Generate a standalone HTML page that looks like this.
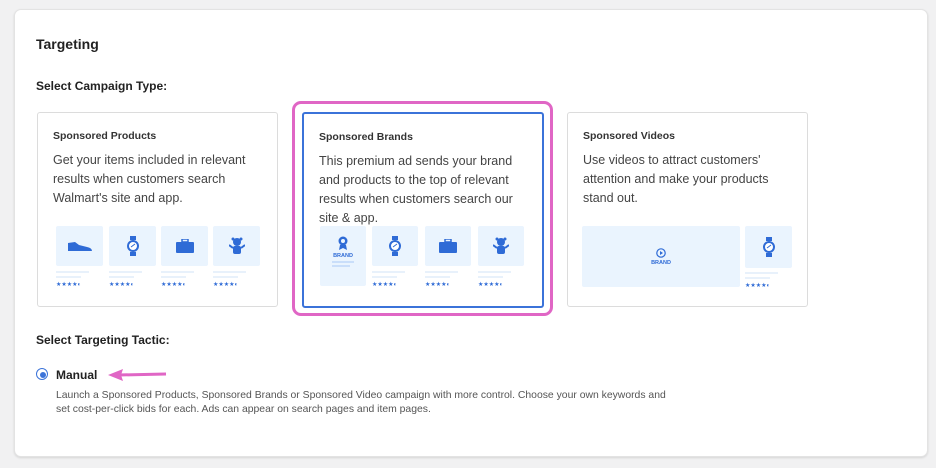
<!DOCTYPE html><html><head><style>
body{margin:0;width:936px;height:468px;background:#f1f1f2;font-family:"Liberation Sans",sans-serif;position:relative;overflow:hidden}
.main{position:absolute;left:14px;top:9px;width:912px;height:446px;background:#fff;border:1px solid #e3e3e3;border-radius:7px;box-shadow:0 1px 2px rgba(0,0,0,.12)}
.a{position:absolute}
.card{position:absolute;top:112px;width:239px;height:193px;border:1px solid #dcdcdc;border-radius:3px;background:#fff}
.card h4{margin:0;position:absolute;left:15px;top:17px;font-size:10.5px;color:#333;font-weight:bold}
.card p{margin:0;position:absolute;left:15px;top:38px;font-size:12.5px;line-height:19px;color:#444;width:215px}
.tile{position:absolute;background:#eaf4fe;border-radius:2px}
.ln{position:absolute;height:2px;background:#e8f1fb}
.st{position:absolute;font-size:6px;color:#2f6bd6;letter-spacing:0}
.ic{position:absolute;left:50%;top:50%;transform:translate(-50%,-50%)}
</style></head><body>
<div class="main"></div>
<div class="a" style="left:36px;top:36px;font-size:14px;font-weight:bold;color:#222">Targeting</div>
<div class="a" style="left:36px;top:79px;font-size:12px;font-weight:bold;color:#222">Select Campaign Type:</div>

<div class="a" style="left:292px;top:101px;width:255px;height:209px;border:3px solid #e066c5;border-radius:9px"></div>

<div class="card" style="left:37px"><h4>Sponsored Products</h4><p>Get your items included in relevant results when customers search Walmart's site and app.</p></div>
<div class="card" style="left:302px;border:2px solid #3b73d9;width:238px;height:192px"><h4>Sponsored Brands</h4><p>This premium ad sends your brand and products to the top of relevant results when customers search our site &amp; app.</p></div>
<div class="card" style="left:567px"><h4>Sponsored Videos</h4><p>Use videos to attract customers' attention and make your products stand out.</p></div>

<!-- card1 tiles -->
<div class="tile" style="left:56px;top:226px;width:47px;height:40px"><svg class="ic" width="26" height="12" viewBox="0 0 26 12"><path d="M1 3 L8 2 L12 5 L20 7 Q25 8 25 11 L1 11Z" fill="#2f6bd6"/></svg></div>
<div class="tile" style="left:109px;top:226px;width:47px;height:40px"><svg class="ic" width="12" height="20" viewBox="0 0 12 20"><rect x="3" y="0" width="6" height="4" fill="#2f6bd6"/><rect x="3" y="16" width="6" height="4" fill="#2f6bd6"/><circle cx="6" cy="10" r="5" fill="#fff" stroke="#2f6bd6" stroke-width="2"/><path d="M4 11 L8 8" stroke="#2f6bd6"/></svg></div>
<div class="tile" style="left:161px;top:226px;width:47px;height:40px"><svg class="ic" width="18" height="14" viewBox="0 0 18 14"><rect x="6" y="0" width="6" height="3" fill="none" stroke="#2f6bd6" stroke-width="1.5"/><rect x="0" y="3" width="18" height="11" rx="1" fill="#2f6bd6"/></svg></div>
<div class="tile" style="left:213px;top:226px;width:47px;height:40px"><svg class="ic" width="16" height="18" viewBox="0 0 16 18"><circle cx="8" cy="5" r="4" fill="#2f6bd6"/><circle cx="4" cy="2" r="1.5" fill="#2f6bd6"/><circle cx="12" cy="2" r="1.5" fill="#2f6bd6"/><rect x="4" y="9" width="8" height="8" rx="2" fill="#2f6bd6"/><path d="M4 11 L0 8 M12 11 L16 8" stroke="#2f6bd6" stroke-width="2"/></svg></div>
<div class="ln" style="left:56px;top:271px;width:33px"></div><div class="ln" style="left:56px;top:276px;width:25px"></div><div class="st" style="left:56px;top:281px">★★★★◐</div>
<div class="ln" style="left:109px;top:271px;width:33px"></div><div class="ln" style="left:109px;top:276px;width:25px"></div><div class="st" style="left:109px;top:281px">★★★★◐</div>
<div class="ln" style="left:161px;top:271px;width:33px"></div><div class="ln" style="left:161px;top:276px;width:25px"></div><div class="st" style="left:161px;top:281px">★★★★◐</div>
<div class="ln" style="left:213px;top:271px;width:33px"></div><div class="ln" style="left:213px;top:276px;width:25px"></div><div class="st" style="left:213px;top:281px">★★★★◐</div>

<!-- card2 tiles -->
<div class="tile" style="left:320px;top:226px;width:46px;height:60px"><svg class="a" style="left:18px;top:10px" width="10" height="14" viewBox="0 0 10 14"><circle cx="5" cy="5" r="4.5" fill="#2f6bd6"/><circle cx="5" cy="5" r="2" fill="#eaf4fe"/><path d="M2 9 L1 14 L5 12 L9 14 L8 9Z" fill="#2f6bd6"/></svg><div class="a" style="left:0;width:46px;top:27px;text-align:center;font-size:5.5px;font-weight:bold;color:#2f6bd6">BRAND</div><div class="ln" style="left:12px;top:35px;width:22px;background:#c9defa"></div><div class="ln" style="left:12px;top:39px;width:18px;background:#c9defa"></div></div>
<div class="tile" style="left:372px;top:226px;width:46px;height:40px"><svg class="ic" width="12" height="20" viewBox="0 0 12 20"><rect x="3" y="0" width="6" height="4" fill="#2f6bd6"/><rect x="3" y="16" width="6" height="4" fill="#2f6bd6"/><circle cx="6" cy="10" r="5" fill="#fff" stroke="#2f6bd6" stroke-width="2"/><path d="M4 11 L8 8" stroke="#2f6bd6"/></svg></div>
<div class="tile" style="left:425px;top:226px;width:46px;height:40px"><svg class="ic" width="18" height="14" viewBox="0 0 18 14"><rect x="6" y="0" width="6" height="3" fill="none" stroke="#2f6bd6" stroke-width="1.5"/><rect x="0" y="3" width="18" height="11" rx="1" fill="#2f6bd6"/></svg></div>
<div class="tile" style="left:478px;top:226px;width:46px;height:40px"><svg class="ic" width="16" height="18" viewBox="0 0 16 18"><circle cx="8" cy="5" r="4" fill="#2f6bd6"/><circle cx="4" cy="2" r="1.5" fill="#2f6bd6"/><circle cx="12" cy="2" r="1.5" fill="#2f6bd6"/><rect x="4" y="9" width="8" height="8" rx="2" fill="#2f6bd6"/><path d="M4 11 L0 8 M12 11 L16 8" stroke="#2f6bd6" stroke-width="2"/></svg></div>
<div class="ln" style="left:372px;top:271px;width:33px"></div><div class="ln" style="left:372px;top:276px;width:25px"></div><div class="st" style="left:372px;top:281px">★★★★◐</div>
<div class="ln" style="left:425px;top:271px;width:33px"></div><div class="ln" style="left:425px;top:276px;width:25px"></div><div class="st" style="left:425px;top:281px">★★★★◐</div>
<div class="ln" style="left:478px;top:271px;width:33px"></div><div class="ln" style="left:478px;top:276px;width:25px"></div><div class="st" style="left:478px;top:281px">★★★★◐</div>

<!-- card3 -->
<div class="tile" style="left:582px;top:226px;width:158px;height:61px"><svg class="a" style="left:74px;top:22px" width="10" height="10" viewBox="0 0 10 10"><circle cx="5" cy="5" r="4.2" fill="none" stroke="#2f6bd6" stroke-width="1.2"/><path d="M4 3 L7 5 L4 7Z" fill="#2f6bd6"/></svg><div class="a" style="left:0;width:158px;top:34px;text-align:center;font-size:5.5px;font-weight:bold;color:#2f6bd6">BRAND</div></div>
<div class="tile" style="left:745px;top:226px;width:47px;height:42px"><svg class="ic" width="12" height="20" viewBox="0 0 12 20"><rect x="3" y="0" width="6" height="4" fill="#2f6bd6"/><rect x="3" y="16" width="6" height="4" fill="#2f6bd6"/><circle cx="6" cy="10" r="5" fill="#fff" stroke="#2f6bd6" stroke-width="2"/><path d="M4 11 L8 8" stroke="#2f6bd6"/></svg></div>
<div class="ln" style="left:745px;top:272px;width:33px"></div><div class="ln" style="left:745px;top:277px;width:25px"></div><div class="st" style="left:745px;top:282px">★★★★◐</div>

<div class="a" style="left:36px;top:333px;font-size:12px;font-weight:bold;color:#222">Select Targeting Tactic:</div>
<div class="a" style="left:36px;top:368px;width:10px;height:10px;border:1.5px solid #3b73d9;border-radius:50%"></div>
<div class="a" style="left:39.5px;top:371.5px;width:6px;height:6px;background:#3b73d9;border-radius:50%"></div>
<div class="a" style="left:56px;top:368px;font-size:12px;font-weight:bold;color:#222">Manual</div>
<svg class="a" style="left:107px;top:368px" width="60" height="14" viewBox="0 0 60 14"><path d="M12 7 L59 6" stroke="#e066c5" stroke-width="3"/><path d="M1 7 L16 1 L14 7 L16 13Z" fill="#e066c5"/></svg>
<div class="a" style="left:56px;top:389px;font-size:10.4px;line-height:14px;color:#555;width:700px;white-space:nowrap">Launch a Sponsored Products, Sponsored Brands or Sponsored Video campaign with more control. Choose your own keywords and<br>set cost-per-click bids for each. Ads can appear on search pages and item pages.</div>
</body></html>
